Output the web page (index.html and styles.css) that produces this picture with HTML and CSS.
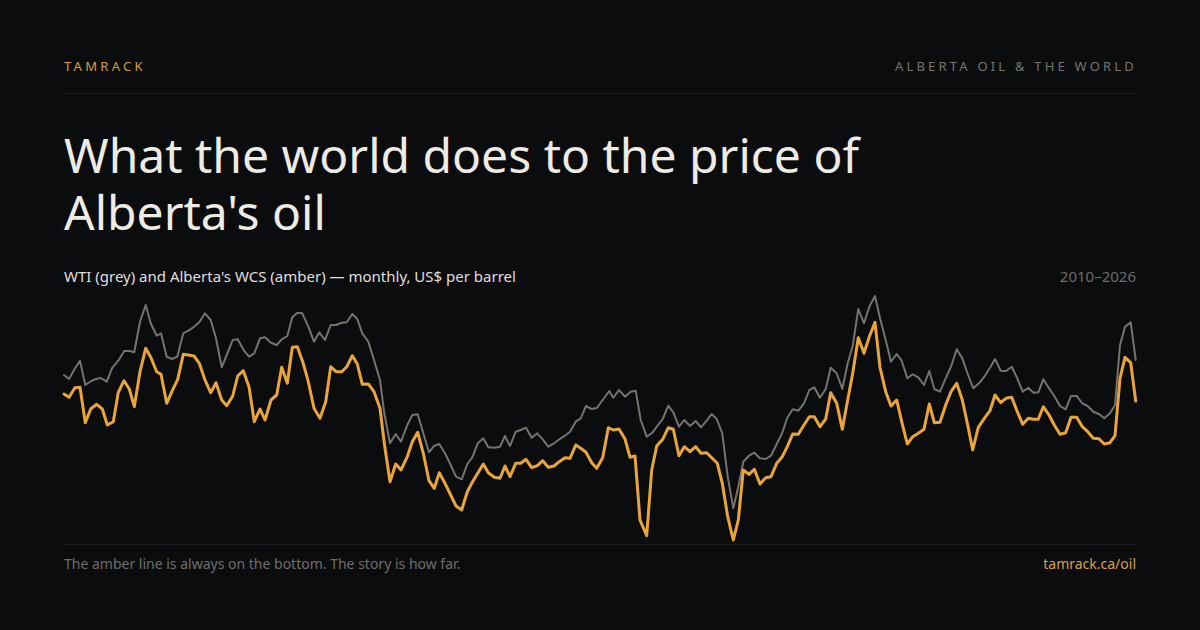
FILE: index.html
```html
<!DOCTYPE html>
<html lang="en">
<head>
<meta charset="utf-8">
<title>What the world does to the price of Alberta's oil</title>
<link rel="stylesheet" href="styles.css">
</head>
<body>
<main class="page">
  <header class="top">
    <span class="brand">TAMRACK</span>
    <span class="section">ALBERTA OIL &amp; THE WORLD</span>
  </header>
  <h1 class="title">What the world does to the price of<br>Alberta's oil</h1>
  <div class="sub-row">
    <span class="sub">WTI (grey) and Alberta's WCS (amber) — monthly, US$ per barrel</span>
    <span class="range">2010–2026</span>
  </div>
  <svg class="chart" width="1072" height="256" viewBox="64 288 1072 256" aria-label="WTI and WCS monthly prices">
    <polyline class="wti" points="64,375 69,379 75,368.3 80,360.7 85.3,385 90,381.7 95,379.3 100.7,378 106.7,381.7 112.3,367.7 118.3,360.7 124.3,351 130,351 134.3,352.3 140,321.7 145.7,305 150.7,323.3 156.7,335.7 161,333.3 166.7,356.7 172.3,359 177.3,356.7 183.3,333.3 188.3,330.7 193.3,327.3 199.3,322.3 205,313.3 210.7,320 216,338.3 221.7,367.3 226.7,355 232.7,340 237.7,339.3 244,350.7 249,356.7 254.3,353.3 260,338.3 265,337.3 271,342.7 276.7,345 281.7,339.3 287.3,336 292.3,317.3 297.3,312.7 302.3,313.3 308.3,326.7 314,341.7 319.3,332.3 325,340 330.7,325 336,325 341.7,322.7 346.7,322.3 352.3,314 357.3,319 362.3,333.3 368.3,341.7 374,360 380,380 384.3,413.3 390,443.3 395.7,434 401,441.7 407.3,425 412.3,415 417.7,414.3 423.3,433.3 429,452.3 434.3,445.7 439.3,444 445,453.3 450.7,465 456,476.7 461.7,479.3 467.3,464 472.3,457.3 477.7,443.3 483.3,438.3 488.3,447.3 494.3,447.7 500,446.7 505,436 510,446 515.7,431.7 520.7,430 526,427.7 531.7,437.7 537.3,433.3 542.7,439.3 548.3,446.7 554,443.3 559.3,439.3 565,435.7 570,431.7 575.7,421.7 580.7,418.3 586,406 591.7,409 596.7,408 602.7,400 609.3,391 613.3,397.7 619,390 625,396.7 630.7,391.7 635.7,390.7 640.7,420 646.7,436.7 652.3,432.7 657.3,426 662.7,419 668.3,405.7 673.3,412.3 679,426.7 684.3,420 690,426 695.7,421 701,427.3 706.7,420.7 711.7,414 716.7,419 722.3,433.3 727.7,476.7 733.3,508.3 738.3,486.7 743.3,461.7 749,455.7 754.3,452.7 760,458.3 765.7,459 771,455.7 776.7,444 782.3,432.7 787.3,417.7 792.7,409.3 798.3,410.7 804,403.3 809.3,390 814.3,387.3 820,397.7 825.7,389 830.7,367.7 836.7,373.3 842.3,389 847.7,363.3 852.7,346 858.3,309 864,323.3 869.3,306.7 875,296 880,318 885.7,340 891,361.7 896.7,354 901.7,360.7 907.3,378.3 912.7,374.3 918.3,377.3 924,385 929.3,371 934.3,389 940,391.7 945.7,378.3 951,366.7 956.7,349.3 962.3,358.3 967.7,374 973.3,388.3 979,383.3 984.3,376.7 990,367.7 995,359 1000.7,370.7 1006,371 1011.7,366.7 1017.3,378.3 1022.7,391.7 1028.3,387.7 1033.3,392.7 1038.3,392.3 1043.3,379.3 1049,388.3 1054.3,396 1060,406 1065.7,409.3 1071,396 1076.7,396 1082.3,403.3 1087.7,406 1093.3,411.7 1099,414 1104.3,418.3 1110,413.3 1115,405 1120,345 1125,326.7 1130.7,322.3 1135.7,360"/>
    <polyline class="wcs" points="64,394 69,397.3 75,387.7 80,387.3 85.3,422.7 90.7,409 96.7,404.3 102.3,409 107.3,425 113.3,421.7 118.3,392.3 124,380.7 129.3,389 134.3,406.7 140,371.7 145.7,348.3 151,357.7 156.7,371.7 161,374.3 166.7,403.3 172.3,390.7 177.7,379.3 183.3,354.3 188.3,355 194,356 199.3,363.3 205,380 210.7,392.7 216,382.7 221.7,400 226.7,405.7 232.7,396 237.7,376 243.3,370.7 249,386.7 254.3,421.7 260,409 265,420 271,400 276.7,395 281.7,367.3 287.3,383.3 292.3,347.3 297.3,346.7 302.7,361.7 308.3,381.7 314,408.3 320,418.3 325.7,401.7 330.7,366.7 336,371.7 341.7,371.7 346.7,366.7 352.3,355.7 357.3,364 362.3,384.3 368.3,384 374,391.7 380,408.3 384.3,443.3 390,481.7 395.7,464 401,470 407.3,456.7 412.3,441.7 417.7,432.3 423.3,453.3 429,480.7 434.3,488.3 439.3,472.7 445,483.3 450.7,495 456,506 461.7,510 467.3,491.7 472.3,482.3 477.7,473.3 483.3,464 488.3,472.7 494.3,477.3 500,478.3 505,466 510,476.7 515.7,463.3 520.7,463.3 526,459.3 531.7,467.7 537.3,465.7 542.7,460.7 548.3,467.3 554,466 559.3,461.7 565,457.7 570,458.3 575.7,445 580.7,448.3 586,452.3 591.7,462.7 596.7,468.3 602.7,457.7 608.3,427.7 613.3,430 619,429 625,439 630,457.3 635,456 640,520 646.7,535.7 651.7,470 656.7,446 662.7,439.3 668.3,427.7 673.3,429.3 679,455.7 684.3,446.7 690,451.7 695.7,446.7 701,453.3 706.7,452.7 711.7,457.7 717.3,463.3 722.3,483.3 727.7,516.7 733.3,540 738.3,520 743.3,470 749,474.3 754.3,469.3 760,484 765.7,477.7 771,476.7 776.7,463.3 782.3,456.7 787.3,446.7 792.7,434 798.3,434.3 804,425 809.3,416.7 814.3,416.7 820,426.7 825.7,419 830.7,392.7 836.7,403.3 842.3,429.3 847.7,400 852.7,373.3 858.3,337.7 864,353.3 869.3,336.7 875,322.3 880,367.5 885.7,391.7 891,406 896.7,400 901.7,421.7 907.3,444 912.7,436.7 918.3,433.3 924,429.3 929.3,404 934.3,422.7 940,422.3 945.7,405 951,391.7 956.7,383.3 962.3,400 967.7,425 972.7,450 978.3,427.3 984.3,418.3 990,410.7 995,395 1000.7,402.7 1006,398.3 1011.7,397.3 1017.3,411.7 1022.7,424.3 1028.3,418.3 1033.3,419.3 1038.3,419.3 1043.3,406.7 1049,415 1054.3,425 1060,434.3 1065.7,432.7 1071,417.3 1076.7,417.3 1082.3,426.7 1087.7,431.7 1093.3,438.3 1099,438.7 1104.3,444 1110,442.7 1115,435.7 1120,378.3 1125,357.3 1130.7,362.7 1135.7,401"/>
  </svg>
  <footer class="foot">
    <span class="note">The amber line is always on the bottom. The story is how far.</span>
    <span class="link">tamrack.ca/oil</span>
  </footer>
</main>
</body>
</html>
```

FILE: styles.css
```css
* {
  box-sizing: border-box;
}

html, body {
  margin: 0;
  padding: 0;
  background: #0b0c0e;
}

body {
  width: 1200px;
  height: 630px;
  overflow: hidden;
  font-family: "Noto Sans", "Open Sans", "DejaVu Sans", sans-serif;
  color: #e8e5de;
}

.page {
  padding: 56px 64px 0;
}

.top {
  display: flex;
  justify-content: space-between;
  align-items: center;
  font-size: 13px;
  line-height: 20px;
  padding-bottom: 17px;
  border-bottom: 1px solid #1d1e21;
}

.brand {
  color: #d99c3c;
  letter-spacing: 3.3px;
}

.section {
  color: #76756f;
  letter-spacing: 3.2px;
  margin-right: -1px;
}

.title {
  margin: 32px 0 0;
  font-size: 48px;
  line-height: 57px;
  font-weight: 400;
  color: #eeebe4;
}

.sub-row {
  display: flex;
  justify-content: space-between;
  align-items: baseline;
  margin-top: 26px;
  font-size: 15px;
  line-height: 20px;
}

.sub {
  color: #e2dfd8;
}

.range {
  color: #6b6b68;
}

.chart {
  display: block;
  margin-top: 2px;
  overflow: visible;
}

.chart polyline {
  fill: none;
  stroke-linejoin: round;
  stroke-linecap: round;
}

.wti {
  stroke: #74736d;
  stroke-width: 2;
}

.wcs {
  stroke: #e9a43a;
  stroke-width: 3;
}

.foot {
  display: flex;
  justify-content: space-between;
  align-items: baseline;
  border-top: 1px solid #1d1e21;
  padding-top: 9px;
  font-size: 14px;
  line-height: 20px;
}

.note {
  color: #6f6e6a;
}

.link {
  color: #dba03f;
}
```
